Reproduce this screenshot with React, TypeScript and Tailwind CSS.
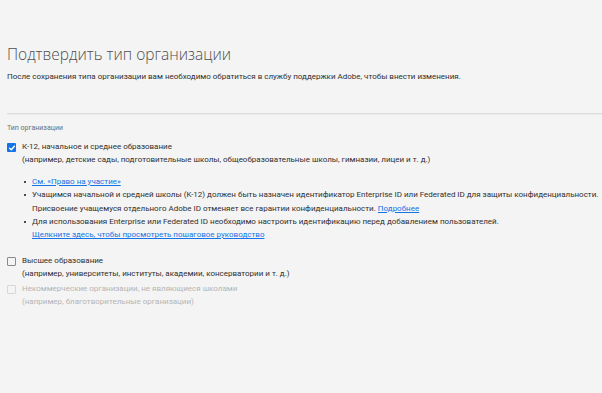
import React from 'react';

const Check = ({ state }: { state: 'on' | 'off' | 'disabled' }) => {
    if (state === 'on') {
        return (
            <span className="mt-[3px] flex h-[9px] w-[9px] shrink-0 items-center justify-center rounded-[1px] bg-[#1473e6]">
                <svg viewBox="0 0 10 10" className="h-[8px] w-[8px]">
                    <path d="M2 5.2 L4.1 7.2 L8 2.8" fill="none" stroke="white" strokeWidth={1.8} strokeLinecap="round" strokeLinejoin="round" />
                </svg>
            </span>
        );
    }
    return (
        <span
            className={`mt-[3px] block h-[9px] w-[9px] shrink-0 rounded-[1px] border-[1.5px] ${
                state === 'off' ? 'border-[#8a8a8a]' : 'border-[#d8d8d8]'
            }`}
        />
    );
};

const Bullet = ({ children }: { children: React.ReactNode }) => (
    <li className="flex">
        <span className="w-[9px] shrink-0 pt-[6px] pl-[1px]">
            <span className="block h-[2px] w-[2px] bg-[#4b4b4b]" />
        </span>
        <div>{children}</div>
    </li>
);

export default function App() {
    return (
        <div className="h-[393px] w-[602px] overflow-hidden bg-[#f4f4f4] font-['Roboto',sans-serif] text-[#4b4b4b]">
            <div className="pl-[7px] pt-[42px]">
                <h1 className="font-['Open_Sans',sans-serif] text-[15.5px] font-light leading-[24px] text-[#4e4e4e]">
                    Подтвердить тип организации
                </h1>
                <p className="mt-[4px] text-[8px] leading-[13px] text-[#2f2f2f]">
                    После сохранения типа организации вам необходимо обратиться в службу поддержки Adobe, чтобы внести изменения.
                </p>
            </div>
            <div className="ml-[7px] mt-[30px] h-[2px] border-t border-[#dcdcdc] bg-[#ececec]" />
            <div className="pl-[7px]">
                <div className="mt-[7px] text-[7px] leading-[12px] text-[#6e6e6e]">Тип организации</div>

                <div className="mt-[6px] flex gap-[6px] text-[8px] leading-[13px] text-[#2f2f2f]">
                    <Check state="on" />
                    <div>
                        <div>К-12, начальное и среднее образование</div>
                        <div>(например, детские сады, подготовительные школы, общеобразовательные школы, гимназии, лицеи и т. д.)</div>
                        <ul className="mt-[9px] pl-[1px] leading-[13.3px]">
                            <Bullet>
                                <a className="text-[#1473e6] underline">См. «Право на участие»</a>
                            </Bullet>
                            <Bullet>
                                <div>
                                    Учащимся начальной и средней школы (K-12) должен быть назначен идентификатор Enterprise ID или Federated ID для защиты конфиденциальности.
                                </div>
                                <div>
                                    Присвоение учащемуся отдельного Adobe ID отменяет все гарантии конфиденциальности.{' '}
                                    <a className="text-[#1473e6] underline">Подробнее</a>
                                </div>
                            </Bullet>
                            <Bullet>
                                <div>Для использования Enterprise или Federated ID необходимо настроить идентификацию перед добавлением пользователей.</div>
                                <a className="text-[#1473e6] underline">Щелкните здесь, чтобы просмотреть пошаговое руководство</a>
                            </Bullet>
                        </ul>
                    </div>
                </div>

                <div className="mt-[13px] flex gap-[6px] text-[8px] leading-[13px] text-[#2f2f2f]">
                    <Check state="off" />
                    <div>
                        <div>Высшее образование</div>
                        <div>(например, университеты, институты, академии, консерватории и т. д.)</div>
                    </div>
                </div>

                <div className="mt-[2px] flex gap-[6px] text-[8px] leading-[13px] text-[#b4b4b4]">
                    <Check state="disabled" />
                    <div>
                        <div>Некоммерческие организации, не являющиеся школами</div>
                        <div>(например, благотворительные организации)</div>
                    </div>
                </div>
            </div>
        </div>
    );
}
